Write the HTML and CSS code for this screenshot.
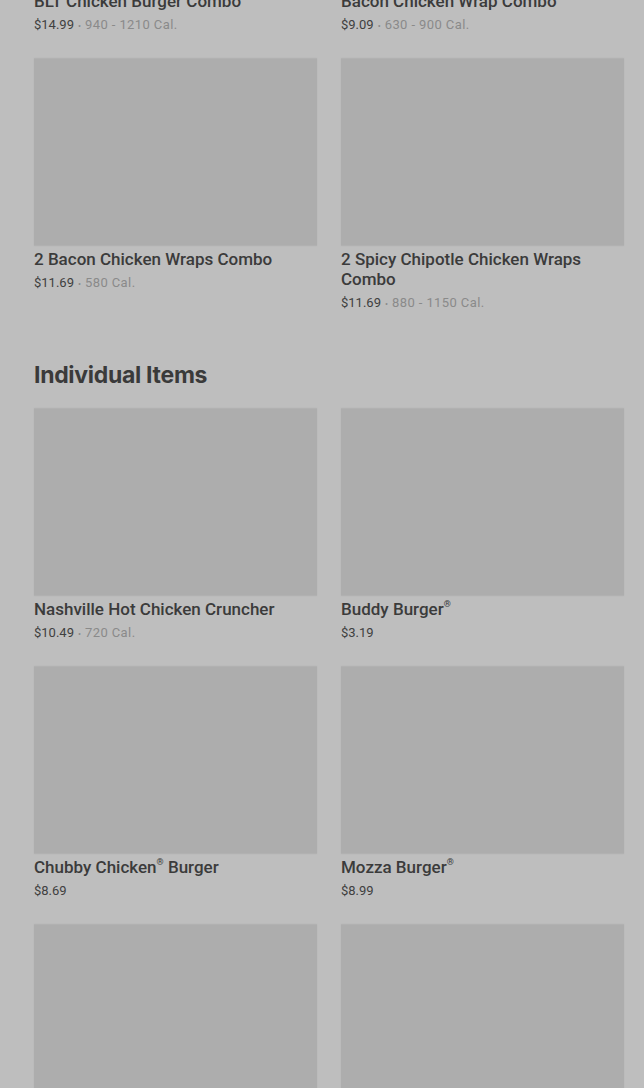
FILE: index.html
```html
<!DOCTYPE html>
<html lang="en">
<head>
<meta charset="utf-8">
<title>Menu</title>
<link rel="stylesheet" href="styles.css">
</head>
<body>
<main class="page">
  <section class="section">
    <div class="grid">
      <article class="item">
        <div class="thumb"></div>
        <h3 class="name">BLT Chicken Burger Combo</h3>
        <p class="meta"><span class="price">$14.99</span><span class="dot">•</span><span class="cal">940 - 1210 Cal.</span></p>
      </article>
      <article class="item">
        <div class="thumb"></div>
        <h3 class="name">Bacon Chicken Wrap Combo</h3>
        <p class="meta"><span class="price">$9.09</span><span class="dot">•</span><span class="cal">630 - 900 Cal.</span></p>
      </article>
      <article class="item">
        <div class="thumb"></div>
        <h3 class="name">2 Bacon Chicken Wraps Combo</h3>
        <p class="meta"><span class="price">$11.69</span><span class="dot">•</span><span class="cal">580 Cal.</span></p>
      </article>
      <article class="item">
        <div class="thumb"></div>
        <h3 class="name">2 Spicy Chipotle Chicken Wraps Combo</h3>
        <p class="meta"><span class="price">$11.69</span><span class="dot">•</span><span class="cal">880 - 1150 Cal.</span></p>
      </article>
    </div>
  </section>

  <section class="section">
    <h2 class="heading">Individual Items</h2>
    <div class="grid">
      <article class="item">
        <div class="thumb"></div>
        <h3 class="name">Nashville Hot Chicken Cruncher</h3>
        <p class="meta"><span class="price">$10.49</span><span class="dot">•</span><span class="cal">720 Cal.</span></p>
      </article>
      <article class="item">
        <div class="thumb"></div>
        <h3 class="name">Buddy Burger<sup class="reg">®</sup></h3>
        <p class="meta"><span class="price">$3.19</span></p>
      </article>
      <article class="item">
        <div class="thumb"></div>
        <h3 class="name">Chubby Chicken<sup class="reg">®</sup> Burger</h3>
        <p class="meta"><span class="price">$8.69</span></p>
      </article>
      <article class="item">
        <div class="thumb"></div>
        <h3 class="name">Mozza Burger<sup class="reg">®</sup></h3>
        <p class="meta"><span class="price">$8.99</span></p>
      </article>
      <article class="item">
        <div class="thumb"></div>
      </article>
      <article class="item">
        <div class="thumb"></div>
      </article>
    </div>
  </section>
</main>
</body>
</html>
```

FILE: styles.css
```css
html, body {
  margin: 0;
  padding: 0;
  background: #bebebe;
  overflow: hidden;
}

body {
  font-family: Roboto, "Liberation Sans", Arial, sans-serif;
  color: #3b3b3b;
}

.page {
  margin-top: -200px;
  padding: 0 20px 0 34px;
  display: flex;
  flex-direction: column;
  gap: 48px;
}

.section {
  display: flex;
  flex-direction: column;
  gap: 18px;
}

.heading {
  margin: 0;
  font-family: Inter, Roboto, "Liberation Sans", sans-serif;
  font-size: 23px;
  line-height: 30px;
  font-weight: 700;
  letter-spacing: -0.3px;
  color: #3a3a3a;
}

.grid {
  display: grid;
  grid-template-columns: 1fr 1fr;
  column-gap: 24px;
  row-gap: 24px;
}

.item {
  display: flex;
  flex-direction: column;
}

.thumb {
  height: 188px;
  background: #adadad;
  box-shadow: inset 0 1px 0 #b1b1b1, inset 0 -1px 0 #b1b1b1, 0 0 2px rgba(0,0,0,0.04);
}

.name {
  margin: 3px 0 0;
  font-size: 17px;
  line-height: 20px;
  font-weight: 500;
  color: #3b3b3b;
}

.reg {
  font-size: 9px;
  line-height: 0;
  vertical-align: 0.9em;
}

.meta {
  margin: 5px 0 0;
  font-size: 13px;
  line-height: 18px;
  color: #8a8a8a;
}

.price {
  color: #404040;
}

.dot {
  margin: 0 4px;
  font-size: 9px;
  line-height: 0;
  color: #8a8a8a;
}

.cal {
  color: #8a8a8a;
  letter-spacing: 0.4px;
}
```
